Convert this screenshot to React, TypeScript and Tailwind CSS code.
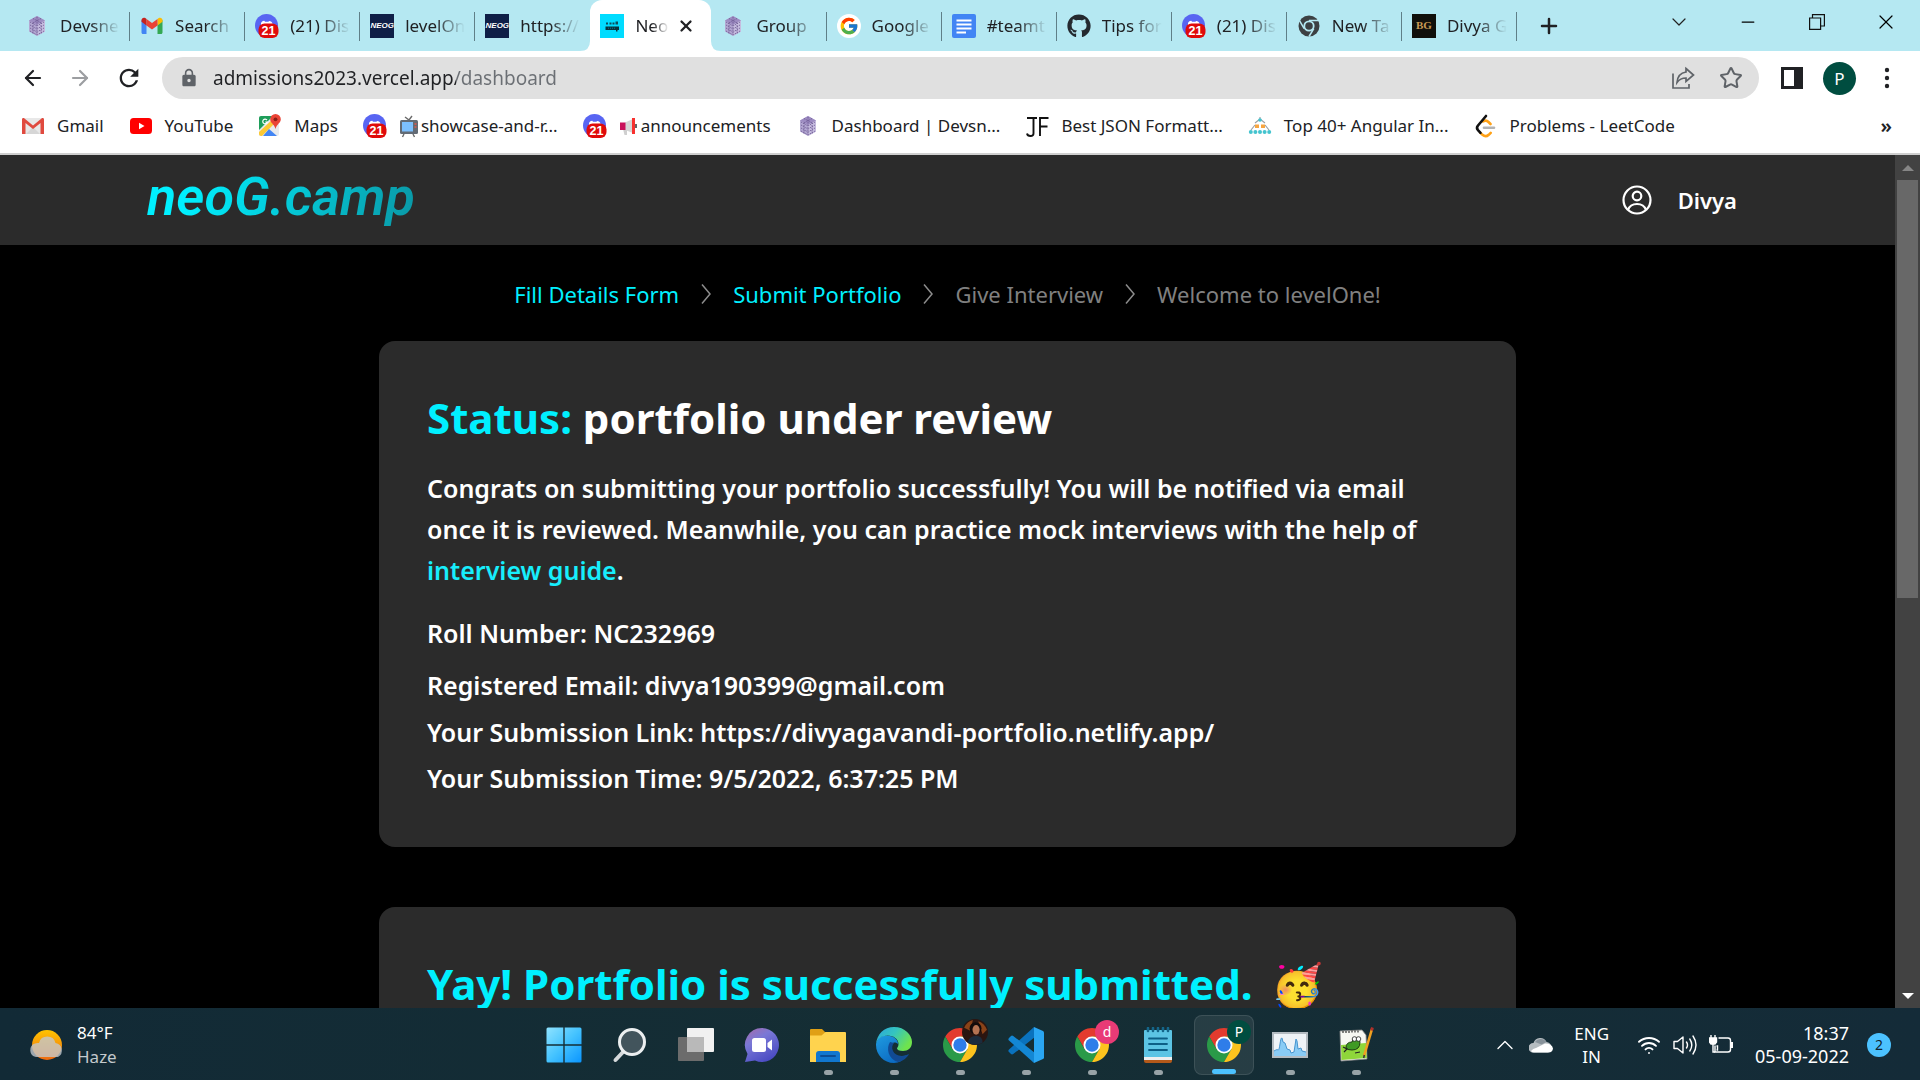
import type { ReactNode } from "react";
import { ArrowLeft, ArrowRight, ChevronDown, ChevronUp, Minus, Plus, Star, Wifi, X } from "lucide-react";
import { FcGoogle } from "react-icons/fc";
import { FaGithub } from "react-icons/fa";
import { MdRefresh, MdLock } from "react-icons/md";

/* ---------- favicons ---------- */

function DevsnestIcon() {
  return (
    <svg viewBox="0 0 24 24" className="size-6">
      <path d="M12 2 20 6.5v11L12 22 4 17.500V6.500Z" fill="#b3a7d2" />
      <path d="M12 2 20 6.500 12 11 4 6.500Z" fill="#9d8cc2" />
      <path d="M12 11v11l8-4.500v-11Z" fill="#c6bcdf" />
      <path d="m5 8 7 4 7-4M5 11l7 4 7-4M5 14l7 4 7-4M5 17l7 4 7-4M8 4.500l8 4.500M16 4.500 8 9M8 8.500v11M16 8.500v11M12 3v18" stroke="#6a568f" strokeWidth=".8" strokeDasharray="1.500 1" fill="none" />
    </svg>
  );
}

function GmailIcon() {
  return (
    <svg viewBox="0 0 24 24" className="size-6">
      <path d="M1.500 6v12.500c0 .8.600 1.500 1.500 1.500h3.500V10Z" fill="#4285f4" />
      <path d="M17.500 20H21c.9 0 1.500-.7 1.500-1.500V6l-5 4Z" fill="#34a853" />
      <path d="M17.500 5v6.500l5-3.700V6c0-2-2.200-3-3.800-1.900Z" fill="#fbbc04" />
      <path d="M6.500 11.500V5l5.500 4 5.500-4v6.500l-5.500 4.100Z" fill="#ea4335" />
      <path d="M1.500 6v1.800l5 3.700V5L5.300 4.100C3.700 3 1.500 4 1.500 6Z" fill="#c5221f" />
    </svg>
  );
}

function OldGmailIcon() {
  return (
    <svg viewBox="0 0 24 24" className="size-6">
      <rect x="1" y="4" width="22" height="16" rx="1.500" fill="#e8e8e8" />
      <path d="M5 20 12 13l7 7Z" fill="#d6d6d6" />
      <path d="M1 20V5.500C1 4 2.500 3.600 3.500 4.500L12 11.500l8.500-7C21.500 3.600 23 4 23 5.500V20h-3.500V9L12 15 4.500 9v11Z" fill="#e04a3f" />
    </svg>
  );
}

function DiscordIcon() {
  return (
    <svg viewBox="0 0 24 24" className="size-6">
      <circle cx="11.500" cy="11.500" r="11.500" fill="#5865f2" />
      <path d="M6 9c1-2 3-2.500 3.500-2l.5.800h3.500L14 7c2 0 3 1 3.500 2.500v2H6Z" fill="#fff" />
      <rect x="3.500" y="9.500" width="20" height="14.500" rx="6" fill="#e00b0b" />
      <text x="13.500" y="21.300" textAnchor="middle" fontSize="12.500" fontWeight="700" fontFamily="Liberation Sans, sans-serif" fill="#fff">21</text>
    </svg>
  );
}

function NeogDarkIcon() {
  return (
    <span className="flex size-6 items-center justify-center overflow-hidden bg-[#0f1f47] font-['Liberation_Sans',sans-serif] text-[8px] leading-none font-bold text-white italic">
      NEOG
    </span>
  );
}

function NeogCyanIcon() {
  return (
    <svg viewBox="0 0 24 24" className="size-6">
      <path d="M0 0h24v24H0Z" fill="#00dcff" />
      <path d="M6 8.500h2v2H6zM9.500 8.500h2v2h-2zM12.500 8.500h2v2h-2zM15.500 7.500H18v3h-2.500z" fill="#0b4d5c" />
      <path d="M5.500 12.500H19v3.500h-1.500v1.500H16V16H5.500Z" fill="#07323c" />
      <path d="M8 14.200h8" stroke="#0b7d92" strokeDasharray="1 1" />
    </svg>
  );
}

function DocsIcon() {
  return (
    <svg viewBox="0 0 24 24" className="size-6">
      <rect width="24" height="24" rx="2" fill="#4285f4" />
      <path d="M4.500 6.500h15M4.500 10.500h15M4.500 14.500h15M4.500 18.500h9.500" stroke="#fff" strokeWidth="2" />
    </svg>
  );
}

function GreyChromeIcon() {
  return (
    <svg viewBox="0 0 24 24" className="size-6">
      <circle cx="12" cy="12" r="10.500" fill="#3c4043" />
      <path d="M12 6.500h9.500M7.200 14.700 2.500 6.700M16.800 14.700 12 22.500" stroke="#b5e8f2" strokeWidth="1.500" />
      <circle cx="12" cy="12" r="5.600" fill="#b5e8f2" />
      <circle cx="12" cy="12" r="3.800" fill="#3c4043" />
    </svg>
  );
}

function BgIcon() {
  return (
    <span className="flex size-6 items-center justify-center bg-[#11100c] font-['Liberation_Serif',serif] text-[11px] leading-none font-bold text-[#c79a54]">
      BG
    </span>
  );
}

function YouTubeIcon() {
  return (
    <svg viewBox="0 0 24 24" className="size-6">
      <rect x="1" y="4" width="22" height="16" rx="3.500" fill="#f00" />
      <path d="m10 8.800 5.500 3.200L10 15.200Z" fill="#fff" />
    </svg>
  );
}

function MapsIcon() {
  return (
    <svg viewBox="0 0 24 24" className="size-6">
      <rect x="1" y="2" width="20" height="20" rx="2" fill="#e8eaed" />
      <path d="M3 2h12L1 16V4c0-1.100.9-2 2-2Z" fill="#1e9e5a" />
      <path d="m1 18 14-13 3 3L4 22H3c-1.100 0-2-.9-2-2Z" fill="#fcc934" />
      <path d="m5 22 6-7 8 7Z" fill="#4285f4" />
      <path d="M9 6.200A2.300 2.300 0 1 0 9.300 8H7.200" stroke="#fff" strokeWidth="1.200" fill="none" />
      <path d="M17.500 0a5.300 5.300 0 0 1 5.300 5.300c0 3.700-4 4.700-5.300 9.700-1.300-5-5.300-6-5.300-9.700A5.300 5.300 0 0 1 17.500 0Z" fill="#ea4335" />
      <circle cx="17.500" cy="5.300" r="1.900" fill="#8a1f16" />
    </svg>
  );
}

function TvIcon() {
  return (
    <svg viewBox="0 0 20 24" className="h-6 w-5">
      <path d="m6 3 4 3 3-4M5 20l-1.500 3M14 20l1.500 3" stroke="#6b6b6b" strokeWidth="1.400" fill="none" />
      <rect x="1" y="6" width="18" height="14" rx="1.500" fill="#636b75" />
      <rect x="3" y="8" width="11" height="9.500" fill="#7cc0ff" />
      <path d="M15.500 10h2M15.500 13h2" stroke="#e2574c" strokeWidth="1.500" />
    </svg>
  );
}

function MegaphoneIcon() {
  return (
    <svg viewBox="0 0 20 24" className="h-6 w-5">
      <path d="M4 15h4v6H5.500Z" fill="#cfcfcf" />
      <path d="M6 8.500 14 5v14l-8-3Z" fill="#d5d5d5" />
      <path d="M1 8.500h5.500v7.500H1Z" fill="#c9115a" />
      <path d="M13 4h3v16h-3Z" fill="#f8312f" />
      <path d="M17 10v4" stroke="#333" strokeWidth="1.500" />
    </svg>
  );
}

function JsonFormatterIcon() {
  return (
    <svg viewBox="0 0 24 24" className="size-6">
      <path d="M2 4h10M8.500 4v15.500q0 2.500-3 2.500-3 0-3.500-2.500M23.500 4H15v18M15 12.500h7.500" stroke="#111" strokeWidth="1.900" fill="none" />
    </svg>
  );
}

function AngularBookmarkIcon() {
  return (
    <svg viewBox="0 0 24 24" className="size-6">
      <path d="M12 3v3M7 9l5-4 5 4M3 16l4-5M21 16l-4-5" stroke="#9aa0a6" strokeWidth="1.200" fill="none" />
      <circle cx="12" cy="6" r="1.800" fill="#45c4cf" />
      <path d="M7 10.500h4v3.500H7zM13 10.500h4v3.500h-4z" fill="#f7a540" />
      <g fill="#45c4cf">
        <circle cx="2.800" cy="18" r="2" />
        <circle cx="7.400" cy="18" r="2" />
        <circle cx="12" cy="18" r="2" />
        <circle cx="16.600" cy="18" r="2" />
        <circle cx="21.200" cy="18" r="2" />
      </g>
    </svg>
  );
}

function LeetCodeIcon() {
  return (
    <svg viewBox="0 0 24 24" className="size-6" fill="none" strokeLinecap="round" strokeWidth="2.600">
      <path d="m10 7.500c2-1.300 4-1 5.500.5l2 2M7.500 18.800l2 2c2 1.800 4.500 1.600 6.200 0l2-2" stroke="#ffa116" />
      <path d="M13 2 5 11.500q-2 2.300 0 4.600l2.500 2.700" stroke="#111" />
      <path d="M11 13.700h10" stroke="#b3b3b3" />
    </svg>
  );
}

/* ---------- toolbar drawings ---------- */

function ShareIcon() {
  return (
    <svg viewBox="0 0 24 24" className="size-6" fill="none" stroke="#5f6368" strokeWidth="1.700">
      <path d="M2 7.500V22h16v-4" />
      <path d="M15 2.500 22.500 9 15 15.500V12c-4 0-6.500 1-9 4.500C6.500 10.500 9.500 6.800 15 6Z" />
    </svg>
  );
}

function SidePanelIcon() {
  return (
    <svg viewBox="0 0 22 22" className="size-[22px]">
      <path d="M0 0h22v22H0Z" fill="#202124" />
      <path d="M3 3h10v16H3Z" fill="#fff" />
    </svg>
  );
}

function MenuDots() {
  return (
    <svg viewBox="0 0 6 22" className="h-[22px] w-1.5" fill="#202124">
      <circle cx="3" cy="3" r="2.200" />
      <circle cx="3" cy="11" r="2.200" />
      <circle cx="3" cy="19" r="2.200" />
    </svg>
  );
}

function RestoreIcon() {
  return (
    <svg viewBox="0 0 16 16" className="size-4" fill="none" stroke="#111" strokeWidth="1.200">
      <path d="M.6 4h11v11.400H.6Z" />
      <path d="M3.500 4V.6h11.900V12h-3.800" />
    </svg>
  );
}

/* ---------- taskbar drawings ---------- */

function ChromeIcon({ badge }: { badge: ReactNode }) {
  return (
    <span className="relative">
      <svg viewBox="0 0 48 48" className="size-[34px]">
        <path d="M24 12h20.780A24 24 0 0 0 3.220 12l10.390 18Z" fill="#e33b2e" />
        <path d="M3.220 12A24 24 0 0 0 24 48l10.390-18H13.610Z" fill="#2a9a48" />
        <path d="M24 48A24 24 0 0 0 44.780 12H24l10.390 18Z" fill="#fcc31e" />
        <circle cx="24" cy="24" r="12" fill="#fff" />
        <circle cx="24" cy="24" r="9.400" fill="#2f7de9" />
      </svg>
      <span className="absolute -top-2 -right-2.5 flex size-6 items-center justify-center">{badge}</span>
    </span>
  );
}

function PhotoBadge() {
  return (
    <svg viewBox="0 0 24 24" className="size-[26px] shrink-0">
      <circle cx="12" cy="12" r="12" fill="#2b1510" />
      <path d="M2 8q3-6 8-7l-2 10ZM15 2q6 2 8 8l-4 4Z" fill="#8a4318" />
      <circle cx="12.500" cy="8.500" r="5.500" fill="#120b0b" />
      <ellipse cx="13" cy="10" rx="3.300" ry="4.500" fill="#b57352" />
      <path d="M5 21.500q2-6 8-6t6 6.500q-7 4-14-.5Z" fill="#1b2c3d" />
    </svg>
  );
}

function LetterBadge({ letter, tone }: { letter: string; tone: string }) {
  return (
    <span className={`flex size-6 shrink-0 items-center justify-center rounded-full text-sm leading-none text-white ${tone}`}>
      {letter}
    </span>
  );
}

function WindowsIcon() {
  return (
    <svg viewBox="0 0 36 36" className="size-9">
      <defs>
        <linearGradient id="win" x1="0" y1="0" x2="1" y2="1">
          <stop offset="0" stopColor="#8fe3ff" />
          <stop offset=".5" stopColor="#45c3ff" />
          <stop offset="1" stopColor="#0a95ff" />
        </linearGradient>
      </defs>
      <path d="M2 .5h15.300v16.800H.5V2Q.5.500 2 .5ZM18.700.5H34q1.500 0 1.500 1.500v15.300H18.700ZM.5 18.700h16.800v16.800H2Q.5 35.500.5 34ZM18.700 18.700h16.800V34q0 1.500-1.500 1.500H18.700Z" fill="url(#win)" />
    </svg>
  );
}

function SearchIcon() {
  return (
    <svg viewBox="0 0 36 36" className="size-9">
      <path d="m11.500 24.500-8 8.500" stroke="#d5d9db" strokeWidth="4" strokeLinecap="round" />
      <circle cx="20" cy="15" r="12.500" fill="#42545c" stroke="#eceff0" strokeWidth="3" />
    </svg>
  );
}

function TaskViewIcon() {
  return (
    <svg viewBox="0 0 36 36" className="size-9">
      <rect y="10" width="26" height="24" rx="1" fill="#6c6c6c" />
      <rect x="9" y="1" width="27" height="24" rx="1" fill="#f1f1f1" />
      <path d="M9 10h17v15H9Z" fill="#b9b9b9" />
    </svg>
  );
}

function ChatIcon() {
  return (
    <svg viewBox="0 0 36 36" className="size-9">
      <defs>
        <linearGradient id="chat" x1="0" y1="0" x2=".6" y2="1">
          <stop offset="0" stopColor="#a86aa8" />
          <stop offset=".4" stopColor="#7a78d6" />
          <stop offset="1" stopColor="#4b4cc4" />
        </linearGradient>
      </defs>
      <path d="M18 1a17 17 0 1 1-7 32.500L1 35l2.500-8A17 17 0 0 1 18 1Z" fill="url(#chat)" />
      <rect x="8" y="11" width="14" height="14" rx="2.500" fill="#fff" />
      <path d="M23.500 16 28 12.500v11L23.500 20Z" fill="#fff" />
    </svg>
  );
}

function ExplorerIcon() {
  return (
    <svg viewBox="0 0 36 36" className="size-9">
      <path d="M0 3q0-1 1-1h11l4 4v6H0Z" fill="#e0a015" />
      <path d="M0 8.500h11.500l4-3.500H35q1 0 1 1v29H0Z" fill="#ffd34e" />
      <path d="M6 35V27q0-3 3-3h18q3 0 3 3v8Z" fill="#1177cf" />
      <path d="M11 29h14" stroke="#0b4d94" strokeWidth="2" strokeLinecap="round" />
    </svg>
  );
}

function EdgeIcon() {
  return (
    <svg viewBox="0 0 36 36" className="size-9">
      <defs>
        <linearGradient id="edgeTop" x1="0" y1="0" x2="1" y2=".5">
          <stop offset="0" stopColor="#2ba4dd" />
          <stop offset=".5" stopColor="#34c4c0" />
          <stop offset="1" stopColor="#6fe34d" />
        </linearGradient>
        <linearGradient id="edgeBase" x1="0" y1="0" x2=".7" y2="1">
          <stop offset="0" stopColor="#1f9be0" />
          <stop offset="1" stopColor="#0a67c0" />
        </linearGradient>
      </defs>
      <path d="M0 17C1 10 8 7 14 9c5 1 8 4 8 8-5-4-9 1-7 7 2 5 8 7 16 4-3 5-8 8-13 8C8 36 0 28 0 18Z" fill="url(#edgeBase)" />
      <path d="M14 15c-4 6-2 17 8 20 5-1 9-4 11-8-8 4-14 1-16-3-1.500-3-.8-6 1-8Z" fill="#114a93" />
      <path d="M0 17C1 7 8 0 18 0c11 0 18 8 18 15 0 6-4 9-9 9-4 0-6-1.500-6-2.500s1.500-1.500 1.500-4.500c0-5-5-8.500-11-8.500C6 8.500 1 12 0 17Z" fill="url(#edgeTop)" />
    </svg>
  );
}

function VsCodeIcon() {
  return (
    <svg viewBox="0 0 36 36" className="size-9">
      <path d="M26 0 1 22.500q-1.300 1.300 0 2.600l2 2q1 .8 2.200 0L27 10Z" fill="#0a72bd" />
      <path d="M26 36 1 13.500q-1.300-1.300 0-2.600l2-2q1-.8 2.200 0L27 26Z" fill="#1387d4" />
      <path d="m26 0 9 4q1 .5 1 1.500v25q0 1-1 1.500l-9 4Z" fill="#2aa6f2" />
    </svg>
  );
}

function NotepadIcon() {
  return (
    <svg viewBox="0 0 30 36" className="h-9 w-[30px]">
      <path d="M1 31h28v3q0 2-2 2H3q-2 0-2-2Z" fill="#b3591a" />
      <path d="M1 29h28v4H1Z" fill="#eee" />
      <path d="M1 4q0-1 1-1h26q1 0 1 1v26H1Z" fill="#5cc4e4" />
      <path d="M6 11.500h18M6 17h18M6 23h18" stroke="#0c5f86" strokeWidth="1.800" strokeLinecap="round" />
      <path d="M5 1v3M10 1v3M15 1v3M20 1v3M25 1v3" stroke="#14668a" strokeWidth="2.600" strokeLinecap="round" />
    </svg>
  );
}

function MonitorIcon() {
  return (
    <svg viewBox="0 0 36 28" className="h-7 w-9">
      <path d="M0 1h36v26H0Z" fill="#b4bcc2" />
      <path d="M2 3h32v22H2Z" fill="#eef3f7" />
      <path d="M2 20c2-1 3-2 4-1 2 1 2-13 4-12l1 4 2 1 2 6 3 1 1 3 3-1 2-13 1 2 1 8 3-1 1 3 4 1v4H2Z" fill="#8accf5" />
      <path d="M2 20c2-1 3-2 4-1 2 1 2-13 4-12l1 4 2 1 2 6 3 1 1 3 3-1 2-13 1 2 1 8 3-1 1 3 4 1" fill="none" stroke="#4795cf" />
    </svg>
  );
}

function NotepadPlusIcon() {
  return (
    <svg viewBox="0 0 36 36" className="size-9">
      <path d="m2 4 22-1 4 5 1 24L3 34Z" fill="#f7f7f2" stroke="#8a8a8a" strokeWidth=".8" />
      <path d="m3 18 25-2 .8 15L3.500 33Z" fill="#8fd63a" />
      <path d="M5 4v2M8 4v2M11 4v2M14 3.500v2M17 3.500v2M20 3.500v2" stroke="#333" strokeWidth="1.200" />
      <path d="M8 21q0-6 6-6 0-4 4-4t4 4q0 8-8 8-5 0-6-2Z" fill="#3f9a24" stroke="#1d3d12" />
      <circle cx="16.500" cy="12" r="2.300" fill="#fff" stroke="#222" strokeWidth=".8" />
      <circle cx="20.500" cy="12" r="2.300" fill="#fff" stroke="#222" strokeWidth=".8" />
      <path d="m5 20 4 2-3 3M17 26l5-1" stroke="#222" fill="none" strokeWidth="1.200" />
      <path d="m34 2-8 27" stroke="#f0a020" strokeWidth="2.600" />
      <path d="m34.500.5-1 3" stroke="#b0302a" strokeWidth="2.800" />
      <path d="m26.300 28-.6 3" stroke="#333" strokeWidth="1.500" />
    </svg>
  );
}

function WeatherIcon() {
  return (
    <svg viewBox="0 0 36 32" className="h-8 w-9">
      <defs>
        <linearGradient id="sun" x1="0" y1="0" x2="0" y2="1">
          <stop offset="0" stopColor="#ffc400" />
          <stop offset="1" stopColor="#ee6a12" />
        </linearGradient>
      </defs>
      <circle cx="18" cy="16" r="15" fill="url(#sun)" />
      <path d="M7 28a7 7 0 0 1-1-13.500 7 7 0 0 1 4-.5 8.500 8.500 0 0 1 16.500 0A7.500 7.500 0 0 1 29 28Z" fill="#c3c9cf" fillOpacity=".78" />
    </svg>
  );
}

function CloudIcon() {
  return (
    <svg viewBox="0 0 24 16" className="h-4 w-6">
      <path d="M4 15.500a4.500 4.500 0 0 1 .5-9.500A7 7 0 0 1 17.500 5 5.500 5.500 0 0 1 19 15.500Z" fill="#b5bcc0" />
      <path d="M6 5a7 7 0 0 1 11.500 0l-5 2.500Z" fill="#87929a" />
      <path d="M2 14q2-2.500 5-3l9-4.500q7 0 8 5-.5 4-4.500 4H5Q3 15.500 2 14Z" fill="#fff" />
    </svg>
  );
}

function SpeakerIcon() {
  return (
    <svg viewBox="0 0 24 22" className="h-[22px] w-6" fill="none" stroke="#fff" strokeWidth="1.400" strokeLinecap="round" strokeLinejoin="round">
      <path d="M1 7.500h3.500L10 3v16l-5.500-4.500H1Z" />
      <path d="M13.500 8q2 3 0 6M16.800 5q4 6 0 12M20 2q6 9 0 18" />
    </svg>
  );
}

function BatteryIcon() {
  return (
    <svg viewBox="0 0 24 22" className="h-[22px] w-6" fill="none" stroke="#fff" strokeWidth="1.400">
      <path d="M9.500 4H19q2.500 0 2.500 2.500v9q0 2.500-2.500 2.500H6v-6.500" />
      <path d="M22 9h1v4h-1" strokeWidth="2" />
      <path d="M2 1v4M6 1v4" />
      <path d="M.5 4h7v4L6 10H2L.5 8Z" fill="#fff" />
      <path d="M4 10v8h2M7.500 12h1v4h-1" />
    </svg>
  );
}

function UserCircleIcon() {
  return (
    <svg viewBox="0 0 30 30" className="size-[30px]" fill="none" stroke="#fff" strokeWidth="2.200">
      <circle cx="15" cy="15" r="13.500" />
      <circle cx="15" cy="11" r="4.300" />
      <path d="M6 25q2-6 9-6t9 6" />
    </svg>
  );
}

/* ---------- data ---------- */

type Tab = { title: string; icon: ReactNode; active?: boolean; divider?: boolean };

const tabs: Tab[] = [
  { title: "Devsne", icon: <DevsnestIcon />, divider: true },
  { title: "Search", icon: <GmailIcon />, divider: true },
  { title: "(21) Dis", icon: <DiscordIcon />, divider: true },
  { title: "levelOn", icon: <NeogDarkIcon />, divider: true },
  { title: "https://", icon: <NeogDarkIcon /> },
  { title: "Neo", icon: <NeogCyanIcon />, active: true },
  { title: "Group", icon: <DevsnestIcon />, divider: true },
  { title: "Google", icon: <span className="flex size-6 items-center justify-center rounded-full bg-white"><FcGoogle className="size-5" /></span>, divider: true },
  { title: "#teamt", icon: <DocsIcon />, divider: true },
  { title: "Tips for", icon: <FaGithub className="size-6 text-[#24292f]" />, divider: true },
  { title: "(21) Dis", icon: <DiscordIcon />, divider: true },
  { title: "New Ta", icon: <GreyChromeIcon />, divider: true },
  { title: "Divya G", icon: <BgIcon />, divider: true },
];

const bookmarks: { label: string; icon: ReactNode; emoji?: ReactNode }[] = [
  { label: "Gmail", icon: <OldGmailIcon /> },
  { label: "YouTube", icon: <YouTubeIcon /> },
  { label: "Maps", icon: <MapsIcon /> },
  { label: "showcase-and-r...", icon: <DiscordIcon />, emoji: <TvIcon /> },
  { label: "announcements", icon: <DiscordIcon />, emoji: <MegaphoneIcon /> },
  { label: "Dashboard | Devsn...", icon: <DevsnestIcon /> },
  { label: "Best JSON Formatt...", icon: <JsonFormatterIcon /> },
  { label: "Top 40+ Angular In...", icon: <AngularBookmarkIcon /> },
  { label: "Problems - LeetCode", icon: <LeetCodeIcon /> },
];

const steps = [
  { label: "Fill Details Form", done: true },
  { label: "Submit Portfolio", done: true },
  { label: "Give Interview", done: false },
  { label: "Welcome to levelOne!", done: false },
];

type TaskApp = { name: string; icon: ReactNode; running?: boolean; focused?: boolean };

const apps: TaskApp[] = [
  { name: "Start", icon: <WindowsIcon /> },
  { name: "Search", icon: <SearchIcon /> },
  { name: "Task View", icon: <TaskViewIcon /> },
  { name: "Chat", icon: <ChatIcon /> },
  { name: "File Explorer", icon: <ExplorerIcon />, running: true },
  { name: "Edge", icon: <EdgeIcon />, running: true },
  { name: "Chrome", icon: <ChromeIcon badge={<PhotoBadge />} />, running: true },
  { name: "Visual Studio Code", icon: <VsCodeIcon />, running: true },
  { name: "Chrome, profile d", icon: <ChromeIcon badge={<LetterBadge letter="d" tone="bg-[#e93b76]" />} />, running: true },
  { name: "Notepad", icon: <NotepadIcon />, running: true },
  { name: "Chrome, profile P", icon: <ChromeIcon badge={<LetterBadge letter="P" tone="bg-[#004d40]" />} />, focused: true },
  { name: "Resource Monitor", icon: <MonitorIcon />, running: true },
  { name: "Notepad++", icon: <NotepadPlusIcon />, running: true },
];

/* ---------- browser chrome ---------- */

function TabFoot({ side }: { side: "left" | "right" }) {
  return (
    <svg viewBox="0 0 10 10" className={side === "left" ? "absolute bottom-0 -left-2.5 size-2.5" : "absolute -right-2.5 bottom-0 size-2.5"}>
      <path d={side === "left" ? "M10 0v10H0Q10 10 10 0Z" : "M0 0v10h10Q0 10 0 0Z"} fill="#fff" />
    </svg>
  );
}

function TabStrip() {
  return (
    <div className="flex h-[51px] shrink-0 items-stretch bg-[#b5e8f2] pl-[15px]">
      <div role="tablist" className="flex max-w-[1502px] min-w-0 flex-1">
        {tabs.map((tab, i) => (
          <div
            key={i}
            className={`relative flex min-w-0 flex-1 items-center pl-2.5 ${tab.active ? "rounded-t-xl bg-white pr-4" : "pr-2.5"}`}
          >
            <button role="tab" aria-selected={!!tab.active} className="flex min-w-0 flex-1 items-center gap-[11px] overflow-hidden">
              <span className="shrink-0">{tab.icon}</span>
              <span className="min-w-0 flex-1 overflow-hidden mask-r-from-50% text-left text-[17px] leading-6 whitespace-nowrap text-[#202124]">
                {tab.title}
              </span>
            </button>
            {tab.active && (
              <>
                <button aria-label="Close tab" className="ml-2 shrink-0">
                  <X className="size-[18px] text-[#202124]" strokeWidth={3} />
                </button>
                <TabFoot side="left" />
                <TabFoot side="right" />
              </>
            )}
            {tab.divider && <span className="absolute top-3 right-0 h-[29px] w-px bg-[#5f7f88]" />}
          </div>
        ))}
      </div>
      <button aria-label="New tab" className="ml-5">
        <Plus className="size-6 text-[#202124]" strokeWidth={2.5} />
      </button>
      <div className="ml-auto flex h-[43px] items-center">
        <button aria-label="Search tabs" className="flex w-[69px] justify-center">
          <ChevronDown className="size-6 text-[#222]" strokeWidth={1.2} />
        </button>
        <button aria-label="Minimize" className="flex w-[69px] justify-center">
          <Minus className="size-5 text-black" strokeWidth={1.5} />
        </button>
        <button aria-label="Restore" className="flex w-[69px] justify-center">
          <RestoreIcon />
        </button>
        <button aria-label="Close window" className="flex w-[69px] justify-center">
          <X className="size-6 text-black" strokeWidth={1.2} />
        </button>
      </div>
    </div>
  );
}

function Toolbar() {
  return (
    <div className="flex h-[54px] shrink-0 items-center bg-white pr-[30px] pl-[21px]">
      <div className="flex items-center gap-[23px] pr-[19px]">
        <button aria-label="Back"><ArrowLeft className="size-6 text-[#202124]" strokeWidth={2.2} /></button>
        <button aria-label="Forward"><ArrowRight className="size-6 text-[#9c9ea1]" strokeWidth={2.2} /></button>
        <button aria-label="Reload"><MdRefresh className="size-7 text-[#202124]" /></button>
      </div>
      <div className="flex h-[42px] min-w-0 flex-1 items-center rounded-full bg-[#e0e0e0] pr-4 pl-[17px]">
        <MdLock className="size-5 shrink-0 text-[#5f6368]" />
        <input
          aria-label="Address and search bar"
          defaultValue="admissions2023.vercel.app/dashboard"
          className="ml-3.5 min-w-0 flex-1 bg-[linear-gradient(90deg,#202124_243px,#6b6f74_243px)] bg-clip-text text-[19px] leading-7 text-transparent caret-black outline-none"
        />
        <button aria-label="Share this page" className="mr-6"><ShareIcon /></button>
        <button aria-label="Bookmark this tab"><Star className="size-6 text-[#5f6368]" strokeWidth={2} /></button>
      </div>
      <button aria-label="Side panel" className="ml-[22px]"><SidePanelIcon /></button>
      <button aria-label="Profile" className="ml-5 flex size-[33px] items-center justify-center rounded-full bg-[#004d40] text-[17px] leading-none text-white">
        P
      </button>
      <button aria-label="Menu" className="ml-7"><MenuDots /></button>
    </div>
  );
}

function BookmarksBar() {
  return (
    <div className="flex h-[50px] shrink-0 items-center border-b-2 border-[#cfcfcf] bg-white pr-7 pb-1.5 pl-[21px]">
      <nav aria-label="Bookmarks" className="flex min-w-0 flex-1 items-center gap-[25px]">
        {bookmarks.map((b, i) => (
          <a key={i} href="#" className="flex shrink-0 items-center gap-3 text-[17px] leading-6 whitespace-nowrap text-[#202124]">
            {b.icon}
            <span className="flex items-center gap-0.5">
              {b.emoji}
              {b.label}
            </span>
          </a>
        ))}
      </nav>
      <button aria-label="More bookmarks" className="text-xl leading-6 font-semibold text-[#202124]">»</button>
    </div>
  );
}

/* ---------- page ---------- */

function SiteHeader() {
  return (
    <header className="flex h-[90px] items-center justify-between bg-[#2b2b2b] pr-[158px] pl-[147px]">
      <a
        href="#"
        className="mb-1.5 bg-[linear-gradient(100deg,#00f0ff_15%,#0a95a3_100%)] bg-clip-text pr-2 font-['Roboto',sans-serif] text-[54px] leading-[70px] font-semibold text-transparent italic"
      >
        neoG.camp
      </a>
      <a href="#" className="flex items-center gap-[26px] text-[22px] font-semibold text-white">
        <UserCircleIcon />
        Divya
      </a>
    </header>
  );
}

function Steps() {
  return (
    <ol className="mt-[31px] mb-[29px] flex items-center justify-center gap-[22px] text-[22px] leading-9">
      {steps.map((s, i) => (
        <li key={s.label} className="flex items-center gap-[22px]">
          {i > 0 && (
            <svg viewBox="0 0 10 20" className="h-5 w-2.5" fill="none" stroke="#8c8c8c" strokeWidth="1.500">
              <path d="m1 .5 8 9.500-8 9.500" />
            </svg>
          )}
          {s.done ? <a href="#" className="text-[#00f0ff]">{s.label}</a> : <span className="text-[#808080]">{s.label}</span>}
        </li>
      ))}
    </ol>
  );
}

function StatusCard() {
  return (
    <section className="w-3/5 rounded-2xl bg-[#2b2b2b] p-12 text-[25px] leading-[41px] font-semibold text-white">
      <h1 className="text-[42px] leading-[58px] font-bold">
        <span className="text-[#00f0ff]">Status:</span> portfolio under review
      </h1>
      <p className="mt-[21px]">
        Congrats on submitting your portfolio successfully! You will be notified via email once it is reviewed.
        Meanwhile, you can practice mock interviews with the help of{" "}
        <a href="#" className="text-[#17eefc]">interview guide</a>.
      </p>
      <p className="mt-[22px]">Roll Number: NC232969</p>
      <p className="mt-[11px]">Registered Email: divya190399@gmail.com</p>
      <p className="mt-1.5">Your Submission Link: https://divyagavandi-portfolio.netlify.app/</p>
      <p className="mt-[5px]">Your Submission Time: 9/5/2022, 6:37:25 PM</p>
    </section>
  );
}

function Scrollbar() {
  return (
    <div className="flex w-[25px] shrink-0 flex-col items-center bg-[#424242]">
      <button aria-label="Scroll up" className="flex h-[25px] w-full items-center justify-center">
        <svg viewBox="0 0 12 6" className="h-1.5 w-3"><path d="M0 6 6 0l6 6Z" fill="#868686" /></svg>
      </button>
      <div className="min-h-0 w-full flex-1 px-0.5">
        <div className="h-[52%] bg-[#686868]" />
      </div>
      <button aria-label="Scroll down" className="flex h-[25px] w-full items-center justify-center">
        <svg viewBox="0 0 12 6" className="h-1.5 w-3"><path d="M0 0h12L6 6Z" fill="#fff" /></svg>
      </button>
    </div>
  );
}

/* ---------- taskbar ---------- */

function Taskbar() {
  return (
    <footer className="flex h-[72px] shrink-0 items-center bg-linear-to-r from-[#122a36] via-[#152e34] to-[#142b38] pt-0.5 text-[17px] leading-6 text-white">
      <div className="flex flex-1 items-center">
        <button className="ml-[29px] flex items-center gap-3 text-left">
          <WeatherIcon />
          <span>
            <span className="block">84°F</span>
            <span className="block text-[#c3c9cc]">Haze</span>
          </span>
        </button>
      </div>
      <nav aria-label="Taskbar apps" className="flex">
        {apps.map((a) => (
          <button
            key={a.name}
            aria-label={a.name}
            className={`relative mx-[3px] flex size-[60px] items-center justify-center rounded-lg ${a.focused ? "border border-white/10 bg-white/8" : ""}`}
          >
            {a.icon}
            {a.running && <span className="absolute bottom-0 h-[5px] w-[9px] rounded-full bg-[#98a3a7]" />}
            {a.focused && <span className="absolute bottom-0 h-[5px] w-6 rounded-full bg-[#4cc2ff]" />}
          </button>
        ))}
      </nav>
      <div className="flex flex-1 items-center justify-end">
        <button aria-label="Hidden icons"><ChevronUp className="size-7 text-white" strokeWidth={1.2} /></button>
        <button aria-label="OneDrive" className="ml-2.5"><CloudIcon /></button>
        <button className="ml-[21px] leading-[23px]">
          <span className="block">ENG</span>
          <span className="block">IN</span>
        </button>
        <button aria-label="Network, volume and battery" className="ml-7 flex items-center gap-3">
          <Wifi className="size-6" strokeWidth={1.9} />
          <SpeakerIcon />
          <BatteryIcon />
        </button>
        <button className="ml-[22px] text-right text-lg leading-[23px]">
          <span className="block">18:37</span>
          <span className="block">05-09-2022</span>
        </button>
        <button aria-label="2 notifications" className="mr-[29px] ml-[18px] flex size-6 items-center justify-center rounded-full bg-[#4cc2ff] text-sm text-[#10242e]">
          2
        </button>
      </div>
    </footer>
  );
}

export default function App() {
  return (
    <div className="flex h-screen flex-col overflow-hidden bg-black font-['Noto_Sans',sans-serif]">
      <TabStrip />
      <Toolbar />
      <BookmarksBar />
      <div className="flex min-h-0 flex-1">
        <main className="min-w-0 flex-1 overflow-hidden">
          <SiteHeader />
          <Steps />
          <div className="flex flex-col items-center gap-[60px]">
            <StatusCard />
            <section className="w-3/5 rounded-2xl bg-[#2b2b2b] p-12">
              <h2 className="text-[42px] leading-[58px] font-bold text-[#00f0ff]">
                Yay! Portfolio is successfully submitted. <span className="ml-2">🥳</span>
              </h2>
            </section>
          </div>
        </main>
        <Scrollbar />
      </div>
      <Taskbar />
    </div>
  );
}
